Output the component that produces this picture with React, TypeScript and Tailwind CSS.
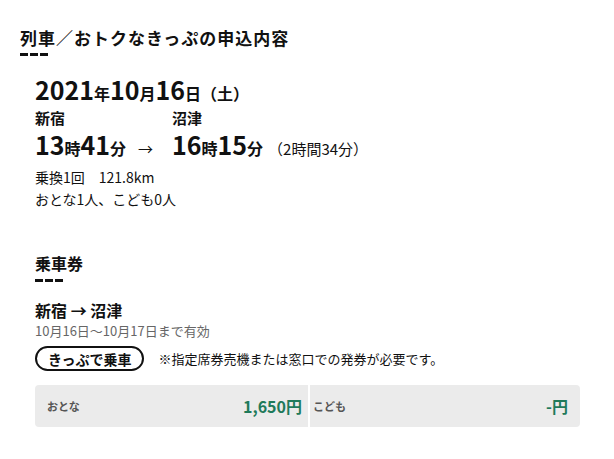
const font = { fontFamily: '"Noto Sans CJK JP", "Noto Sans", sans-serif' };

function Dashes() {
  return (
    <div className="flex gap-[2px]">
      <div className="h-[3px] w-[8px] bg-[#111]" />
      <div className="h-[3px] w-[8px] bg-[#111]" />
      <div className="h-[3px] w-[8px] bg-[#111]" />
    </div>
  );
}

function Big({ n, u }: { n: string; u: string }) {
  return (
    <>
      <span className="text-[25px]">{n}</span>
      <span className="text-[16px] leading-none">{u}</span>
    </>
  );
}

export default function App() {
  return (
    <div className="w-[614px] h-[459px] bg-white text-[#111] pl-[20px] pt-[25px]" style={font}>
      <h1 className="text-[17px] tracking-[1px] font-bold leading-[25px]">列車／おトクなきっぷの申込内容</h1>
      <div className="mt-[3px]">
        <Dashes />
      </div>

      <div className="pl-[15px]">
        <div className="mt-[18px] text-[25px] font-bold leading-[30px]">
          <Big n="2021" u="年" />
          <Big n="10" u="月" />
          <Big n="16" u="日" />
          <span className="text-[16px] leading-none">（土）</span>
        </div>

        <div className="flex mt-[4px]">
          <div className="w-[103px]">
            <div className="text-[15px] font-bold leading-[20px]">新宿</div>
            <div className="text-[25px] font-bold leading-[32px]">
              <Big n="13" u="時" />
              <Big n="41" u="分" />
            </div>
          </div>
          <div className="w-[34px]">
            <div className="h-[20px]" />
            <div className="text-[25px] leading-[32px]">
              <span className="text-[15px] leading-none">→</span>
            </div>
          </div>
          <div>
            <div className="text-[15px] font-bold leading-[20px]">沼津</div>
            <div className="text-[25px] leading-[32px]">
              <span className="font-bold">
                <Big n="16" u="時" />
                <Big n="15" u="分" />
              </span>
              <span className="text-[15px] leading-none ml-[5px]">（2時間34分）</span>
            </div>
          </div>
        </div>

        <div className="mt-[6px] text-[14px] leading-[22px]">
          <div>乗換1回　121.8km</div>
          <div>おとな1人、こども0人</div>
        </div>

        <h2 className="mt-[42px] text-[16px] font-bold leading-[22px]">乗車券</h2>
        <div className="mt-[5px]">
          <Dashes />
        </div>

        <div className="mt-[17px] text-[16px] font-bold leading-[22px]">新宿 → 沼津</div>
        <div className="mt-[1px] text-[13px] text-[#666] leading-[18px]">10月16日～10月17日まで有効</div>

        <div className="flex items-center mt-[6px]">
          <span className="border-2 border-[#111] rounded-full px-[11px] h-[25px] flex items-center text-[14px] font-bold leading-none">
            きっぷで乗車
          </span>
          <span className="ml-[14px] text-[13px]">※指定席券売機または窓口での発券が必要です。</span>
        </div>
      </div>

      <div className="flex gap-[2px] mt-[14px] ml-[15px] w-[545px] h-[42px] rounded-[4px] overflow-hidden">
        <div className="flex-1 bg-[#ebebeb] flex items-center justify-between pl-[12px] pr-[6px]">
          <span className="text-[11px] font-bold text-[#555]">おとな</span>
          <span className="text-[16px] font-bold text-[#1f7a5a]">1,650円</span>
        </div>
        <div className="flex-1 bg-[#ebebeb] flex items-center justify-between pl-[3px] pr-[12px]">
          <span className="text-[11px] font-bold text-[#555]">こども</span>
          <span className="text-[16px] font-bold text-[#1f7a5a]">-円</span>
        </div>
      </div>
    </div>
  );
}
